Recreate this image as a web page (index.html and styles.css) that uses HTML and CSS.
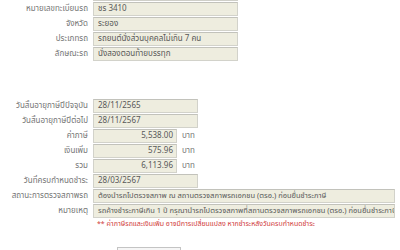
FILE: index.html
```html
<!DOCTYPE html>
<html lang="th">
<head>
<meta charset="utf-8">
<link rel="stylesheet" href="styles.css">
</head>
<body>
<div class="page">
  <div class="stub"></div>
  <div class="group">
    <div class="row"><span class="label">หมายเลขทะเบียนรถ</span><span class="field w-wide">ชร 3410</span></div>
    <div class="row"><span class="label">จังหวัด</span><span class="field w-wide">ระยอง</span></div>
    <div class="row"><span class="label">ประเภทรถ</span><span class="field w-wide">รถยนต์นั่งส่วนบุคคลไม่เกิน 7 คน</span></div>
    <div class="row"><span class="label">ลักษณะรถ</span><span class="field w-wide">นั่งสองตอนท้ายบรรทุก</span></div>
  </div>
  <div class="spacer"></div>
  <div class="group">
    <div class="row"><span class="label">วันสิ้นอายุภาษีปีปัจจุบัน</span><span class="field w-mid">28/11/2565</span></div>
    <div class="row"><span class="label">วันสิ้นอายุภาษีปีต่อไป</span><span class="field w-mid">28/11/2567</span></div>
    <div class="row"><span class="label">ค่าภาษี</span><span class="field w-num num">5,538.00</span><span class="unit">บาท</span></div>
    <div class="row"><span class="label">เงินเพิ่ม</span><span class="field w-num num">575.96</span><span class="unit">บาท</span></div>
    <div class="row"><span class="label">รวม</span><span class="field w-num num">6,113.96</span><span class="unit">บาท</span></div>
    <div class="row"><span class="label">วันที่ครบกำหนดชำระ</span><span class="field w-mid">28/03/2567</span></div>
    <div class="row"><span class="label">สถานะการตรวจสภาพรถ</span><span class="field w-full long">ต้องนำรถไปตรวจสภาพ ณ สถานตรวจสภาพรถเอกชน (ตรอ.) ก่อนยื่นชำระภาษี</span></div>
    <div class="row"><span class="label">หมายเหตุ</span><span class="field w-full long">รถค้างชำระภาษีเกิน 1 ปี กรุณานำรถไปตรวจสภาพที่สถานตรวจสภาพรถเอกชน (ตรอ.) ก่อนยื่นชำระภาษี</span></div>
    <div class="note">** ค่าภาษีรถและเงินเพิ่ม อาจมีการเปลี่ยนแปลง หากชำระหลังวันครบกำหนดชำระ</div>
  </div>
  <div class="actions"><span class="btn"></span></div>
</div>
</body>
</html>
```
FILE: styles.css
```css
html, body {
  margin: 0;
  padding: 0;
  background: #ffffff;
}
body {
  font-family: Tahoma, "Noto Sans Thai", "Noto Sans", "DejaVu Sans", sans-serif;
  font-size: 8px;
  color: #666666;
  overflow: hidden;
}
.page {
  width: 400px;
  height: 250px;
  overflow: hidden;
}
.stub {
  margin-left: 93px;
  width: 145px;
  height: 0;
  border-bottom: 1px solid #cfcfc8;
}
.group {
  display: flex;
  flex-direction: column;
}
.row {
  display: flex;
  align-items: center;
  height: 15px;
}
.label {
  width: 88px;
  text-align: right;
  white-space: nowrap;
  color: #757575;
}
.field {
  box-sizing: border-box;
  margin-left: 5px;
  height: 14px;
  line-height: 12px;
  padding: 0 4px;
  border: 1px solid #d2d2ca;
  border-top-color: #c2c2bb;
  background: #eeeddf;
  color: #585858;
  white-space: nowrap;
  overflow: hidden;
}
.long { font-size: 7.5px; }
.w-wide { width: 145px; }
.w-mid { width: 105px; }
.w-num { width: 84px; }
.w-full { width: 302px; }
.num { text-align: right; padding-right: 3px; }
.unit {
  margin-left: 5px;
  color: #757575;
}
.spacer { height: 37px; }
.note {
  margin-left: 97px;
  height: 12px;
  line-height: 12px;
  font-size: 7px;
  color: #d03a3a;
  white-space: nowrap;
}
.actions {
  margin-top: 17px;
  padding-left: 117px;
}
.btn {
  display: block;
  box-sizing: border-box;
  width: 64px;
  height: 20px;
  border: 1px solid #c4c4c4;
  background: #f6f6f6;
}
```
